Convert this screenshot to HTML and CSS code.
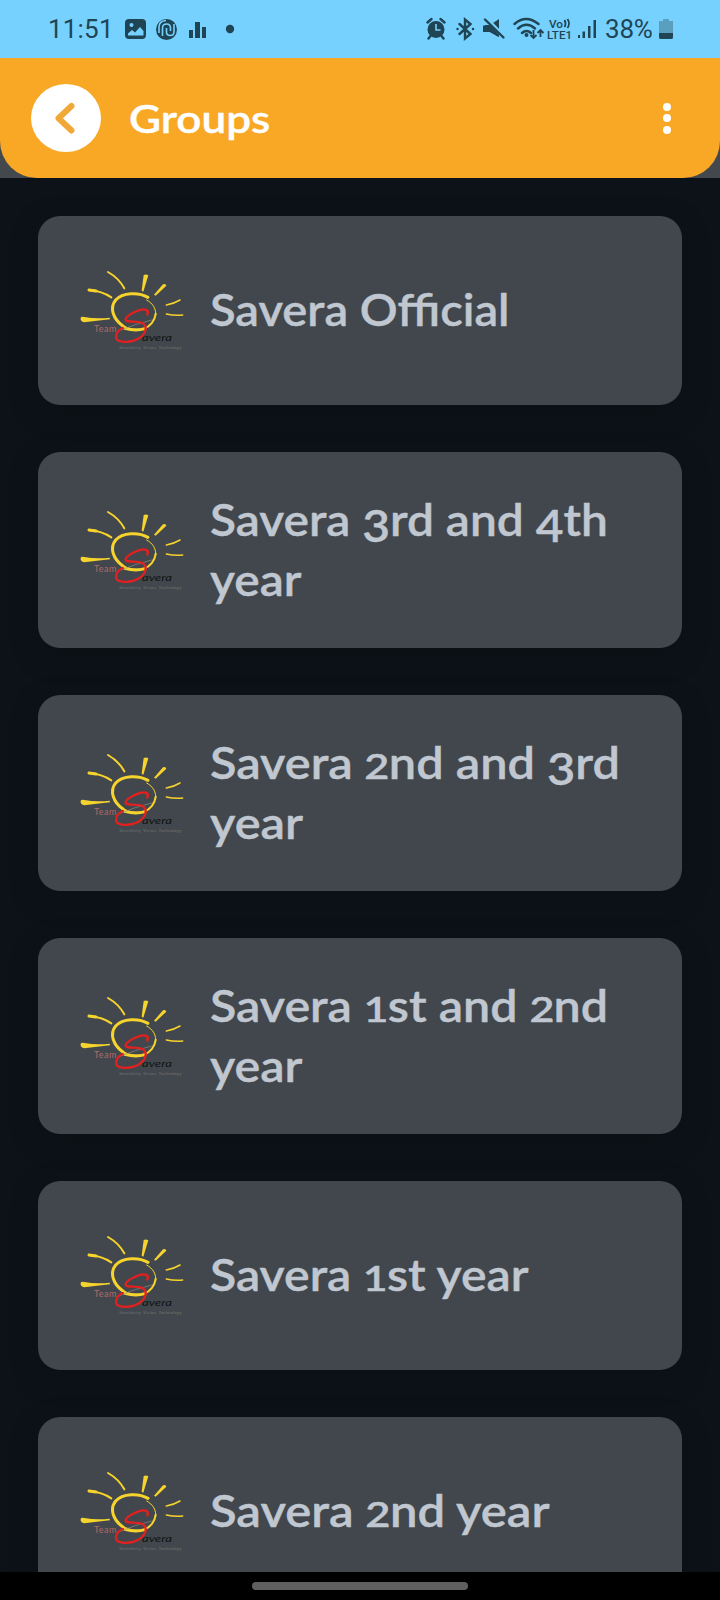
FILE: index.html
```html
<!DOCTYPE html>
<html lang="en">
<head>
<meta charset="utf-8">
<title>Groups</title>
<link rel="stylesheet" href="styles.css">
</head>
<body>
<svg class="defs" aria-hidden="true">
  <symbol id="logo" viewBox="0 0 390 300">
    <g fill="none" stroke="#f6d32d" stroke-linecap="round" stroke-linejoin="round">
      <path d="M114 36Q146 54 163 85" stroke-width="6"/>
      <path d="M57 90Q96 93 124 112" stroke-width="6"/>
      <path d="M57 90L78 93" stroke-width="9"/>
      <path d="M289 135Q312 131 330 120M289 162Q312 167 338 165" stroke-width="4.500"/>
      <path d="M234 112C206 96 158 97 137 120C118 143 129 177 159 198" stroke-width="9"/>
      <path d="M145 187C164 206 198 214 222 206C241 199 255 181 257 161" stroke-width="6"/>
      <path d="M165 205C185 211 205 212 225 206" stroke-width="9"/>
      <path d="M230 120C250 131 259 147 257 168" stroke-width="3"/>
    </g>
    <g fill="#f6d32d">
      <path d="M221 45Q228 41 235 46L220 95L215 92Z"/>
      <path d="M279 73Q287 69 289 77L257 107L252 104Z"/>
      <path d="M32 173Q34 168 43 171Q78 178 119 173L120 178Q80 182 43 187Q30 184 32 173Z"/>
    </g>
    <path d="M148 212Q195 192 245 180" fill="none" stroke="#8f8f86" stroke-width="2"/>
    <path d="M232 164C238 149 226 145 206 151C186 158 165 171 167 180C170 188 196 182 214 188C236 197 228 221 207 235C186 248 147 250 139 236C135 222 146 209 158 204" fill="none" stroke="#e2201f" stroke-width="7" stroke-linecap="round"/>
    <text x="72" y="215" class="logo-team" textLength="67">Team</text>
    <text x="216" y="244" class="logo-name" textLength="90" lengthAdjust="spacingAndGlyphs">avera</text>
    <text x="148" y="268" class="logo-tag" textLength="186">Sensitivity, Vision, Technology</text>
  </symbol>
</svg>
<div class="screen">
  <div class="status">
    <span class="time">11:51</span>
    <svg class="status-left" viewBox="0 0 112 24" width="112" height="24">
      <rect x="1" y="2" width="21" height="20" rx="4"/>
      <g class="cut"><circle cx="7.5" cy="8" r="2"/><path d="M4 18.500v-2l4-3.500 3 2.500 5-5.500 3.500 4v4.500z"/></g>
      <circle cx="42.500" cy="12.500" r="10.500"/>
      <path class="cut-line" d="M38.500 19V11q0-4 4-4t4 4v3M42.500 11v4q0 3.500 3.700 3.500T50 15V7M35 16v-6q0-6 7-6.500"/>
      <path d="M65 13h4v8h-4zM71 5h5v16h-5zM78 10h4v11h-4z"/>
      <circle cx="106" cy="12" r="4.200"/>
    </svg>
    <div class="status-right">
      <svg viewBox="0 0 172 24" width="172" height="24">
        <circle cx="10" cy="12.500" r="8.500"/>
        <path class="line" d="M1.500 5.500 5.500 2M18.500 5.500 14.500 2M4.500 19 2.500 21.500M15.500 19l2 2.500"/>
        <path class="cut-line" d="M10 7v6h4.500"/>
        <path class="line" d="M33.500 7 44.500 17 39 21.500V2.500L44.500 7 33.500 17M31.500 12h.1M47 12h.1"/>
        <path d="M59 8h5l9-6v18l-9-5h-5z"/>
        <path d="M56 .5h6L79 18l-3 3z" fill="#77d1fe"/>
        <path d="M57 8.500h7l8.500 9V20l-8.500-5h-7z"/>
        <path class="line" d="M59 2.500 77.500 20.500"/>
        <path class="line" d="M88.500 7Q100-3 112.500 7M92 11.500q8.500-7.500 17 0M96 16q4.500-4 9 0"/>
        <circle cx="100.500" cy="18" r="2"/>
        <path class="thin" d="M107.500 13v8M104.500 18l3 3 3-3M114.500 20v-7M111.500 16l3-3 3 3"/>
        <text x="123" y="10.500" class="lte" textLength="14" lengthAdjust="spacingAndGlyphs">Vo</text>
        <path class="thin" d="M138.500 3q2 3.500 0 7M141.500 2q3 4.500 0 9"/>
        <text x="121" y="21.500" class="lte" textLength="25" lengthAdjust="spacingAndGlyphs">LTE1</text>
        <path d="M152 18h2v3h-2zM156.500 14.500h2.500V21h-2.500zM162 9h2.500v12H162zM167.500 3h2.500v18h-2.500z"/>
      </svg>
      <span class="percent">38%</span>
      <svg viewBox="0 0 14 24" width="14" height="24"><path d="M4 2h6v2h4v18H0V4h4z" fill="#5b9fbf"/><path d="M0 16h14v4q0 2-2 2H2q-2 0-2-2z"/></svg>
    </div>
  </div>
  <div class="header-wrap">
    <header class="header">
      <span class="back"><svg viewBox="0 0 70 68" width="70" height="68"><path d="M40.500 22 27.500 34.200 40.500 46.500"/></svg></span>
      <h1>Groups</h1>
      <span class="menu"><i></i><i></i><i></i></span>
    </header>
  </div>
  <main class="list">
    <section class="card"><svg class="logo"><use href="#logo"/></svg><p class="t1">Savera Official</p></section>
    <section class="card tall"><svg class="logo"><use href="#logo"/></svg><p class="t2">Savera <span class="low">3</span>rd and <span class="low">4</span>th<br>year</p></section>
    <section class="card tall"><svg class="logo"><use href="#logo"/></svg><p class="t3">Savera <span class="small">2</span>nd and <span class="low">3</span>rd<br>year</p></section>
    <section class="card tall"><svg class="logo"><use href="#logo"/></svg><p class="t4">Savera <span class="small">1</span>st and <span class="small">2</span>nd<br>year</p></section>
    <section class="card"><svg class="logo"><use href="#logo"/></svg><p class="t5">Savera <span class="small">1</span>st year</p></section>
    <section class="card"><svg class="logo"><use href="#logo"/></svg><p class="t6">Savera <span class="small">2</span>nd year</p></section>
  </main>
  <footer class="nav"><span class="pill"></span></footer>
</div>
</body>
</html>
```
FILE: styles.css
```css
* { box-sizing: border-box; }
body { margin: 0; background: #0c1218; font-family: Lato, "Open Sans", sans-serif; }
.defs { display: none; }
.screen { width: 720px; height: 1600px; display: flex; flex-direction: column; overflow: hidden; }
.status {
  flex: none; height: 58px; background: #77d1fe; color: #1f4555; fill: #1f4555;
  display: flex; align-items: center; padding: 0 47px 0 48px;
  font: 26px/58px Roboto, sans-serif;
}
.status svg { display: block; flex: none; }
.time { width: 76px; letter-spacing: 0.2px; }
.status-right { margin-left: auto; display: flex; align-items: center; }
.percent { width: 54px; margin-left: 7px; letter-spacing: -0.2px; white-space: nowrap; }
.cut { fill: #77d1fe; }
.cut-line { fill: none; stroke: #77d1fe; stroke-width: 1.6; }
.line { fill: none; stroke: #1f4555; stroke-width: 2.4; stroke-linecap: round; }
.thin { fill: none; stroke: #1f4555; stroke-width: 1.8; }
.lte { font: 500 11.5px Roboto, sans-serif; }
.header-wrap { flex: none; height: 120px; background: #42484c; }
.header {
  height: 120px; background: #f9a826; border-radius: 0 0 37px 37px;
  display: flex; align-items: center; padding: 0 49px 0 31px;
}
.back { width: 70px; height: 68px; border-radius: 50%; background: #fff; }
.back svg { display: block; fill: none; stroke: #f0a836; stroke-width: 6; stroke-linecap: round; stroke-linejoin: round; }
.header h1 {
  margin: 0 0 0 28px; font-size: 39px; line-height: 48px; font-weight: 600; color: #fff;
  -webkit-text-stroke: 0.4px #fff; transform: scaleX(1.13); transform-origin: left;
}
.menu { margin-left: auto; display: grid; gap: 3.5px; }
.menu i { width: 8px; height: 8px; border-radius: 50%; background: #fff; }
.list { flex: 1; min-height: 0; overflow: hidden; padding: 38px 38px 0; display: flex; flex-direction: column; gap: 47px; }
.card {
  flex: none; height: 189px; padding-left: 32px; border-radius: 22px; background: #41474c;
  box-shadow: 0 8px 24px #0d1114; display: flex; align-items: center;
}
.tall { height: 196px; }
.logo { width: 130px; height: 100px; flex: none; margin-bottom: 1px; }
.logo-team { font: 27px Lato, sans-serif; fill: #b06a69; }
.logo-name { font: italic 31px Lato, sans-serif; fill: #101314; }
.logo-tag { font: italic 12px Lato, sans-serif; fill: #777b7d; }
.card p {
  margin: 0 0 3px 10px; font-size: 44px; line-height: 60px; font-weight: 600; color: #c0c7d0; white-space: nowrap;
  -webkit-text-stroke: 0.4px #c0c7d0; transform-origin: left;
}
.t1 { transform: scaleX(1.07); }
.t2 { transform: scaleX(1.088); }
.t3 { transform: scaleX(1.106); }
.t4 { transform: scaleX(1.1); }
.t5 { transform: scaleX(1.095); }
.t6 { transform: scaleX(1.113); }
.small { display: inline-block; line-height: 1; font-size: 34px; transform: scaleX(1.15); margin: 0 1px; }
.low { display: inline-block; line-height: 1; transform: translateY(6px); }
.nav { flex: none; height: 28px; background: #000; display: flex; justify-content: center; padding-top: 10px; }
.pill { width: 216px; height: 8px; border-radius: 4px; background: #5f5f5f; }
```
